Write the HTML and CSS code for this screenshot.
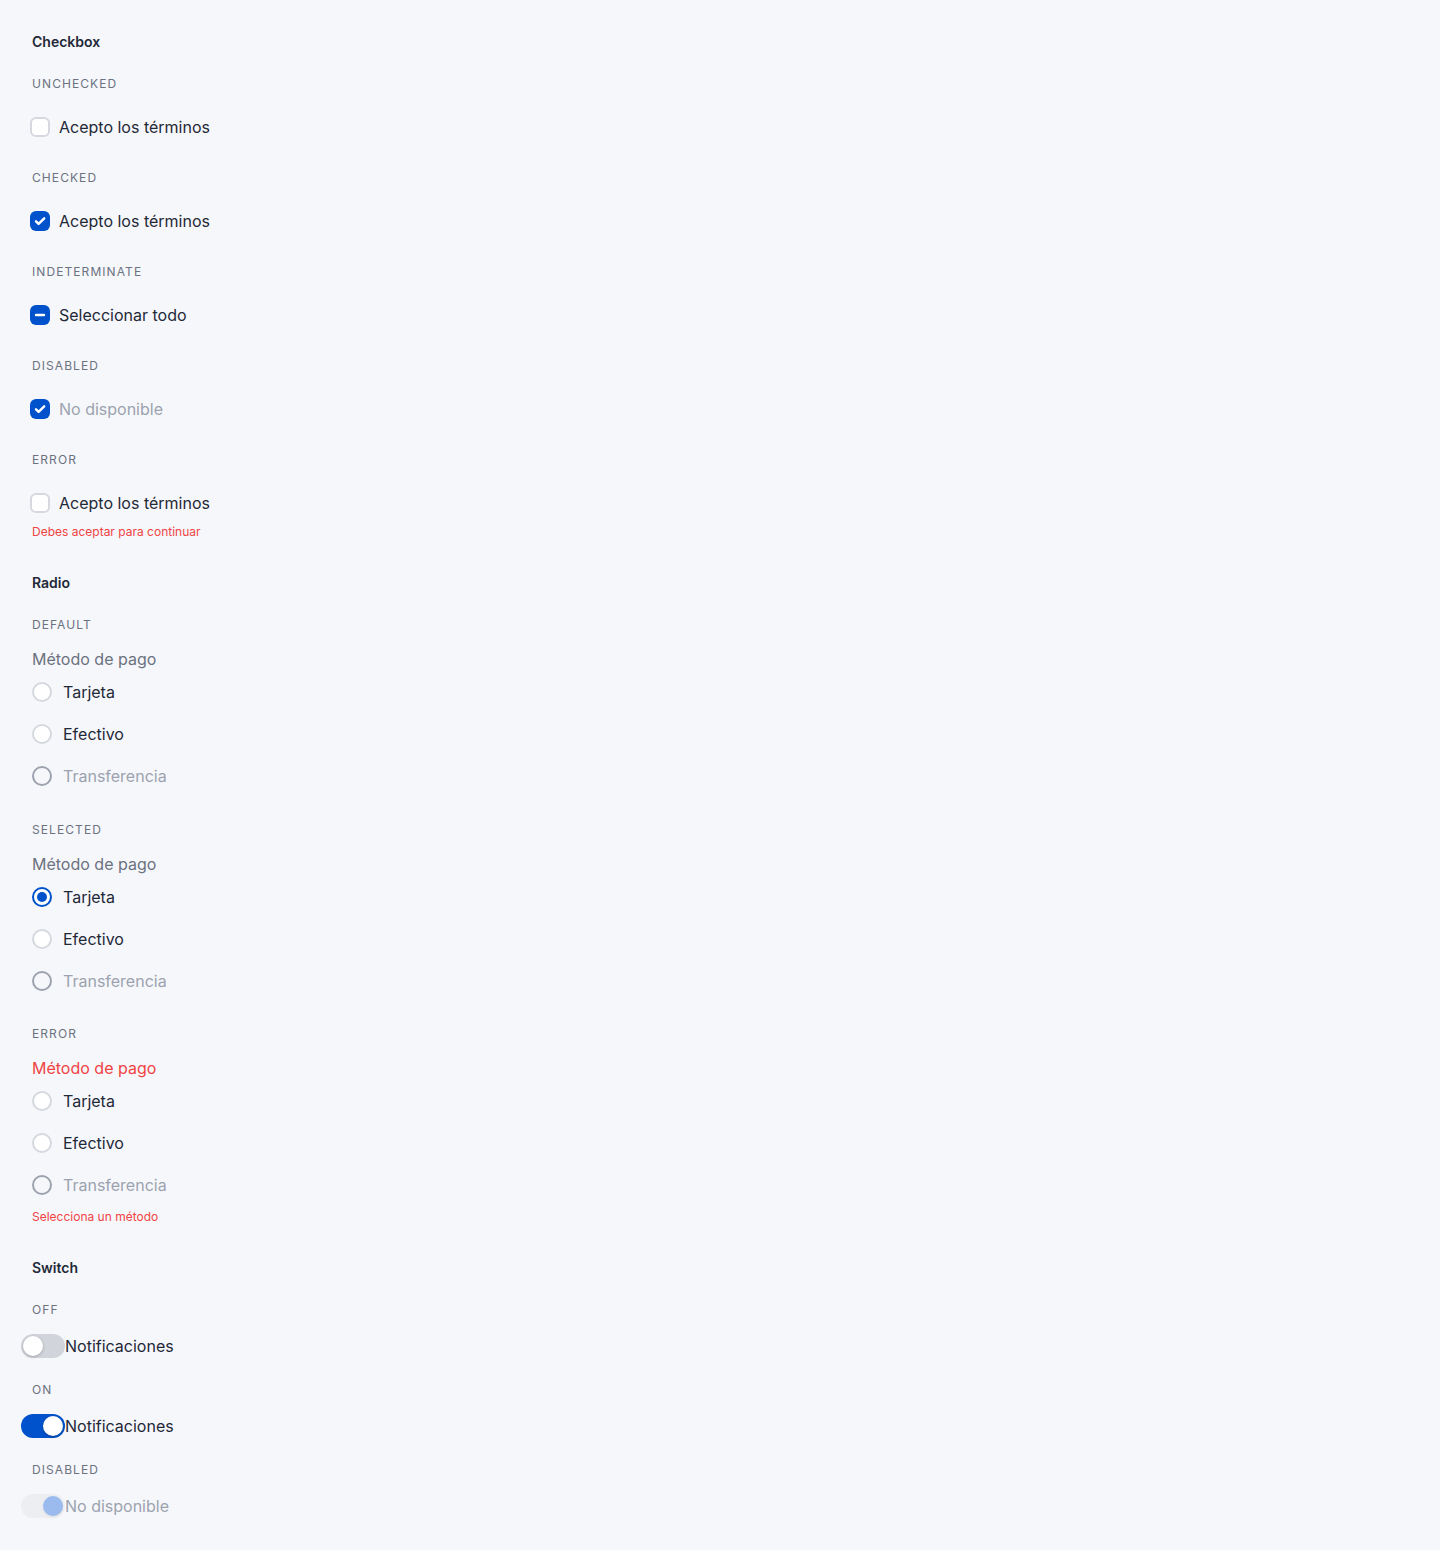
FILE: index.html
```html
<!DOCTYPE html>
<html lang="es">
<head>
    <meta charset="UTF-8">
    <meta name="viewport" content="width=device-width, initial-scale=1.0">
    <title>Controles de formulario</title>
    <link rel="stylesheet" href="styles.css">
</head>
<body>
    <div class="page">
        <!-- Checkbox -->
        <section class="section">
            <h2 class="section-title">Checkbox</h2>
            <div class="states">
                <div class="state">
                    <div class="state-label">Unchecked</div>
                    <label class="check-row">
                        <span class="box"></span>
                        <span class="text">Acepto los términos</span>
                    </label>
                </div>
                <div class="state">
                    <div class="state-label">Checked</div>
                    <label class="check-row">
                        <span class="box checked">
                            <svg viewBox="0 0 20 20" width="20" height="20"><path d="M6 10.3l2.6 2.6L14.2 7.3" fill="none" stroke="#fff" stroke-width="2.4" stroke-linecap="round" stroke-linejoin="round"/></svg>
                        </span>
                        <span class="text">Acepto los términos</span>
                    </label>
                </div>
                <div class="state">
                    <div class="state-label">Indeterminate</div>
                    <label class="check-row">
                        <span class="box checked">
                            <svg viewBox="0 0 20 20" width="20" height="20"><path d="M6 10h8" fill="none" stroke="#fff" stroke-width="2.4" stroke-linecap="round"/></svg>
                        </span>
                        <span class="text">Seleccionar todo</span>
                    </label>
                </div>
                <div class="state">
                    <div class="state-label">Disabled</div>
                    <label class="check-row disabled">
                        <span class="box checked">
                            <svg viewBox="0 0 20 20" width="20" height="20"><path d="M6 10.3l2.6 2.6L14.2 7.3" fill="none" stroke="#fff" stroke-width="2.4" stroke-linecap="round" stroke-linejoin="round"/></svg>
                        </span>
                        <span class="text">No disponible</span>
                    </label>
                </div>
                <div class="state">
                    <div class="state-label">Error</div>
                    <label class="check-row">
                        <span class="box"></span>
                        <span class="text">Acepto los términos</span>
                    </label>
                    <div class="hint">Debes aceptar para continuar</div>
                </div>
            </div>
        </section>

        <!-- Radio -->
        <section class="section">
            <h2 class="section-title">Radio</h2>
            <div class="states">
                <div class="state">
                    <div class="state-label">Default</div>
                    <div class="radio-group">
                        <div class="legend">Método de pago</div>
                        <label class="radio-row"><span class="dot"></span><span class="text">Tarjeta</span></label>
                        <label class="radio-row"><span class="dot"></span><span class="text">Efectivo</span></label>
                        <label class="radio-row disabled"><span class="dot"></span><span class="text">Transferencia</span></label>
                    </div>
                </div>
                <div class="state">
                    <div class="state-label">Selected</div>
                    <div class="radio-group">
                        <div class="legend">Método de pago</div>
                        <label class="radio-row"><span class="dot selected"></span><span class="text">Tarjeta</span></label>
                        <label class="radio-row"><span class="dot"></span><span class="text">Efectivo</span></label>
                        <label class="radio-row disabled"><span class="dot"></span><span class="text">Transferencia</span></label>
                    </div>
                </div>
                <div class="state">
                    <div class="state-label">Error</div>
                    <div class="radio-group">
                        <div class="legend error">Método de pago</div>
                        <label class="radio-row"><span class="dot"></span><span class="text">Tarjeta</span></label>
                        <label class="radio-row"><span class="dot"></span><span class="text">Efectivo</span></label>
                        <label class="radio-row disabled"><span class="dot"></span><span class="text">Transferencia</span></label>
                    </div>
                    <div class="hint">Selecciona un método</div>
                </div>
            </div>
        </section>

        <!-- Switch -->
        <section class="section">
            <h2 class="section-title">Switch</h2>
            <div class="states">
                <div class="state">
                    <div class="state-label">Off</div>
                    <label class="switch-row">
                        <span class="track"><span class="knob"></span></span>
                        <span class="text">Notificaciones</span>
                    </label>
                </div>
                <div class="state">
                    <div class="state-label">On</div>
                    <label class="switch-row">
                        <span class="track on"><span class="knob"></span></span>
                        <span class="text">Notificaciones</span>
                    </label>
                </div>
                <div class="state">
                    <div class="state-label">Disabled</div>
                    <label class="switch-row disabled">
                        <span class="track on"><span class="knob"></span></span>
                        <span class="text">No disponible</span>
                    </label>
                </div>
            </div>
        </section>
    </div>
</body>
</html>
```

FILE: styles.css
```css
* {
    margin: 0;
    padding: 0;
    box-sizing: border-box;
}

body {
    background: #f6f7fb;
    font-family: 'Inter', 'Noto Sans', sans-serif;
    color: #1f2937;
}

.page {
    padding: 32px;
    display: flex;
    flex-direction: column;
    gap: 33px;
}

.section {
    display: flex;
    flex-direction: column;
}

.section-title {
    font-size: 14px;
    line-height: 20px;
    font-weight: 600;
    color: #1f2937;
    margin-bottom: 23px;
}

.states {
    display: flex;
    flex-direction: column;
    gap: 21px;
}

.state-label {
    font-size: 12px;
    line-height: 16px;
    font-weight: 400;
    letter-spacing: 0.09em;
    text-transform: uppercase;
    color: #6b7280;
    margin-top: 1px;
    margin-bottom: 14px;
}

.text {
    font-size: 16px;
    line-height: 24px;
    color: #1f2937;
}

.disabled .text {
    color: #9ca3af;
}

.hint {
    font-size: 12px;
    line-height: 16px;
    color: #ef4444;
}

/* checkbox */
.check-row {
    height: 42px;
    display: flex;
    align-items: center;
    gap: 9px;
    margin-left: -2px;
}

.box {
    width: 20px;
    height: 20px;
    border-radius: 6px;
    border: 2px solid #d5d8de;
    background: #fff;
    display: flex;
    align-items: center;
    justify-content: center;
    flex-shrink: 0;
}

.box.checked {
    background: #0052cc;
    border: none;
}

/* radio */
.radio-group {
    display: flex;
    flex-direction: column;
    margin-bottom: 2.5px;
}

.legend {
    font-size: 16px;
    line-height: 24px;
    color: #6b7280;
}

.legend.error {
    color: #ef4444;
}

.radio-row {
    height: 42px;
    display: flex;
    align-items: center;
    gap: 11px;
}

.dot {
    width: 20px;
    height: 20px;
    border-radius: 50%;
    border: 2px solid #d5d8de;
    background: #fff;
    flex-shrink: 0;
    display: flex;
    align-items: center;
    justify-content: center;
}

.disabled .dot {
    border-color: #9ca3af;
    background: transparent;
}

.dot.selected {
    border-color: #0052cc;
}

.dot.selected::after {
    content: '';
    width: 10px;
    height: 10px;
    border-radius: 50%;
    background: #0052cc;
}

/* switch */
.switch-row {
    height: 28px;
    display: flex;
    align-items: center;
    margin-left: -11px;
}

.track {
    width: 44px;
    height: 24px;
    border-radius: 12px;
    background: #d1d5db;
    padding: 2px;
    display: flex;
    flex-shrink: 0;
}

.knob {
    width: 20px;
    height: 20px;
    border-radius: 50%;
    background: #fff;
    box-shadow: 0 1px 3px rgba(0, 0, 0, 0.25);
}

.track.on {
    background: #0052cc;
}

.track.on .knob {
    transform: translateX(20px);
}

.disabled .track {
    background: #eceef2;
}

.disabled .knob {
    background: #9bbaee;
    box-shadow: 0 1px 2px rgba(0, 0, 0, 0.08);
}
```
